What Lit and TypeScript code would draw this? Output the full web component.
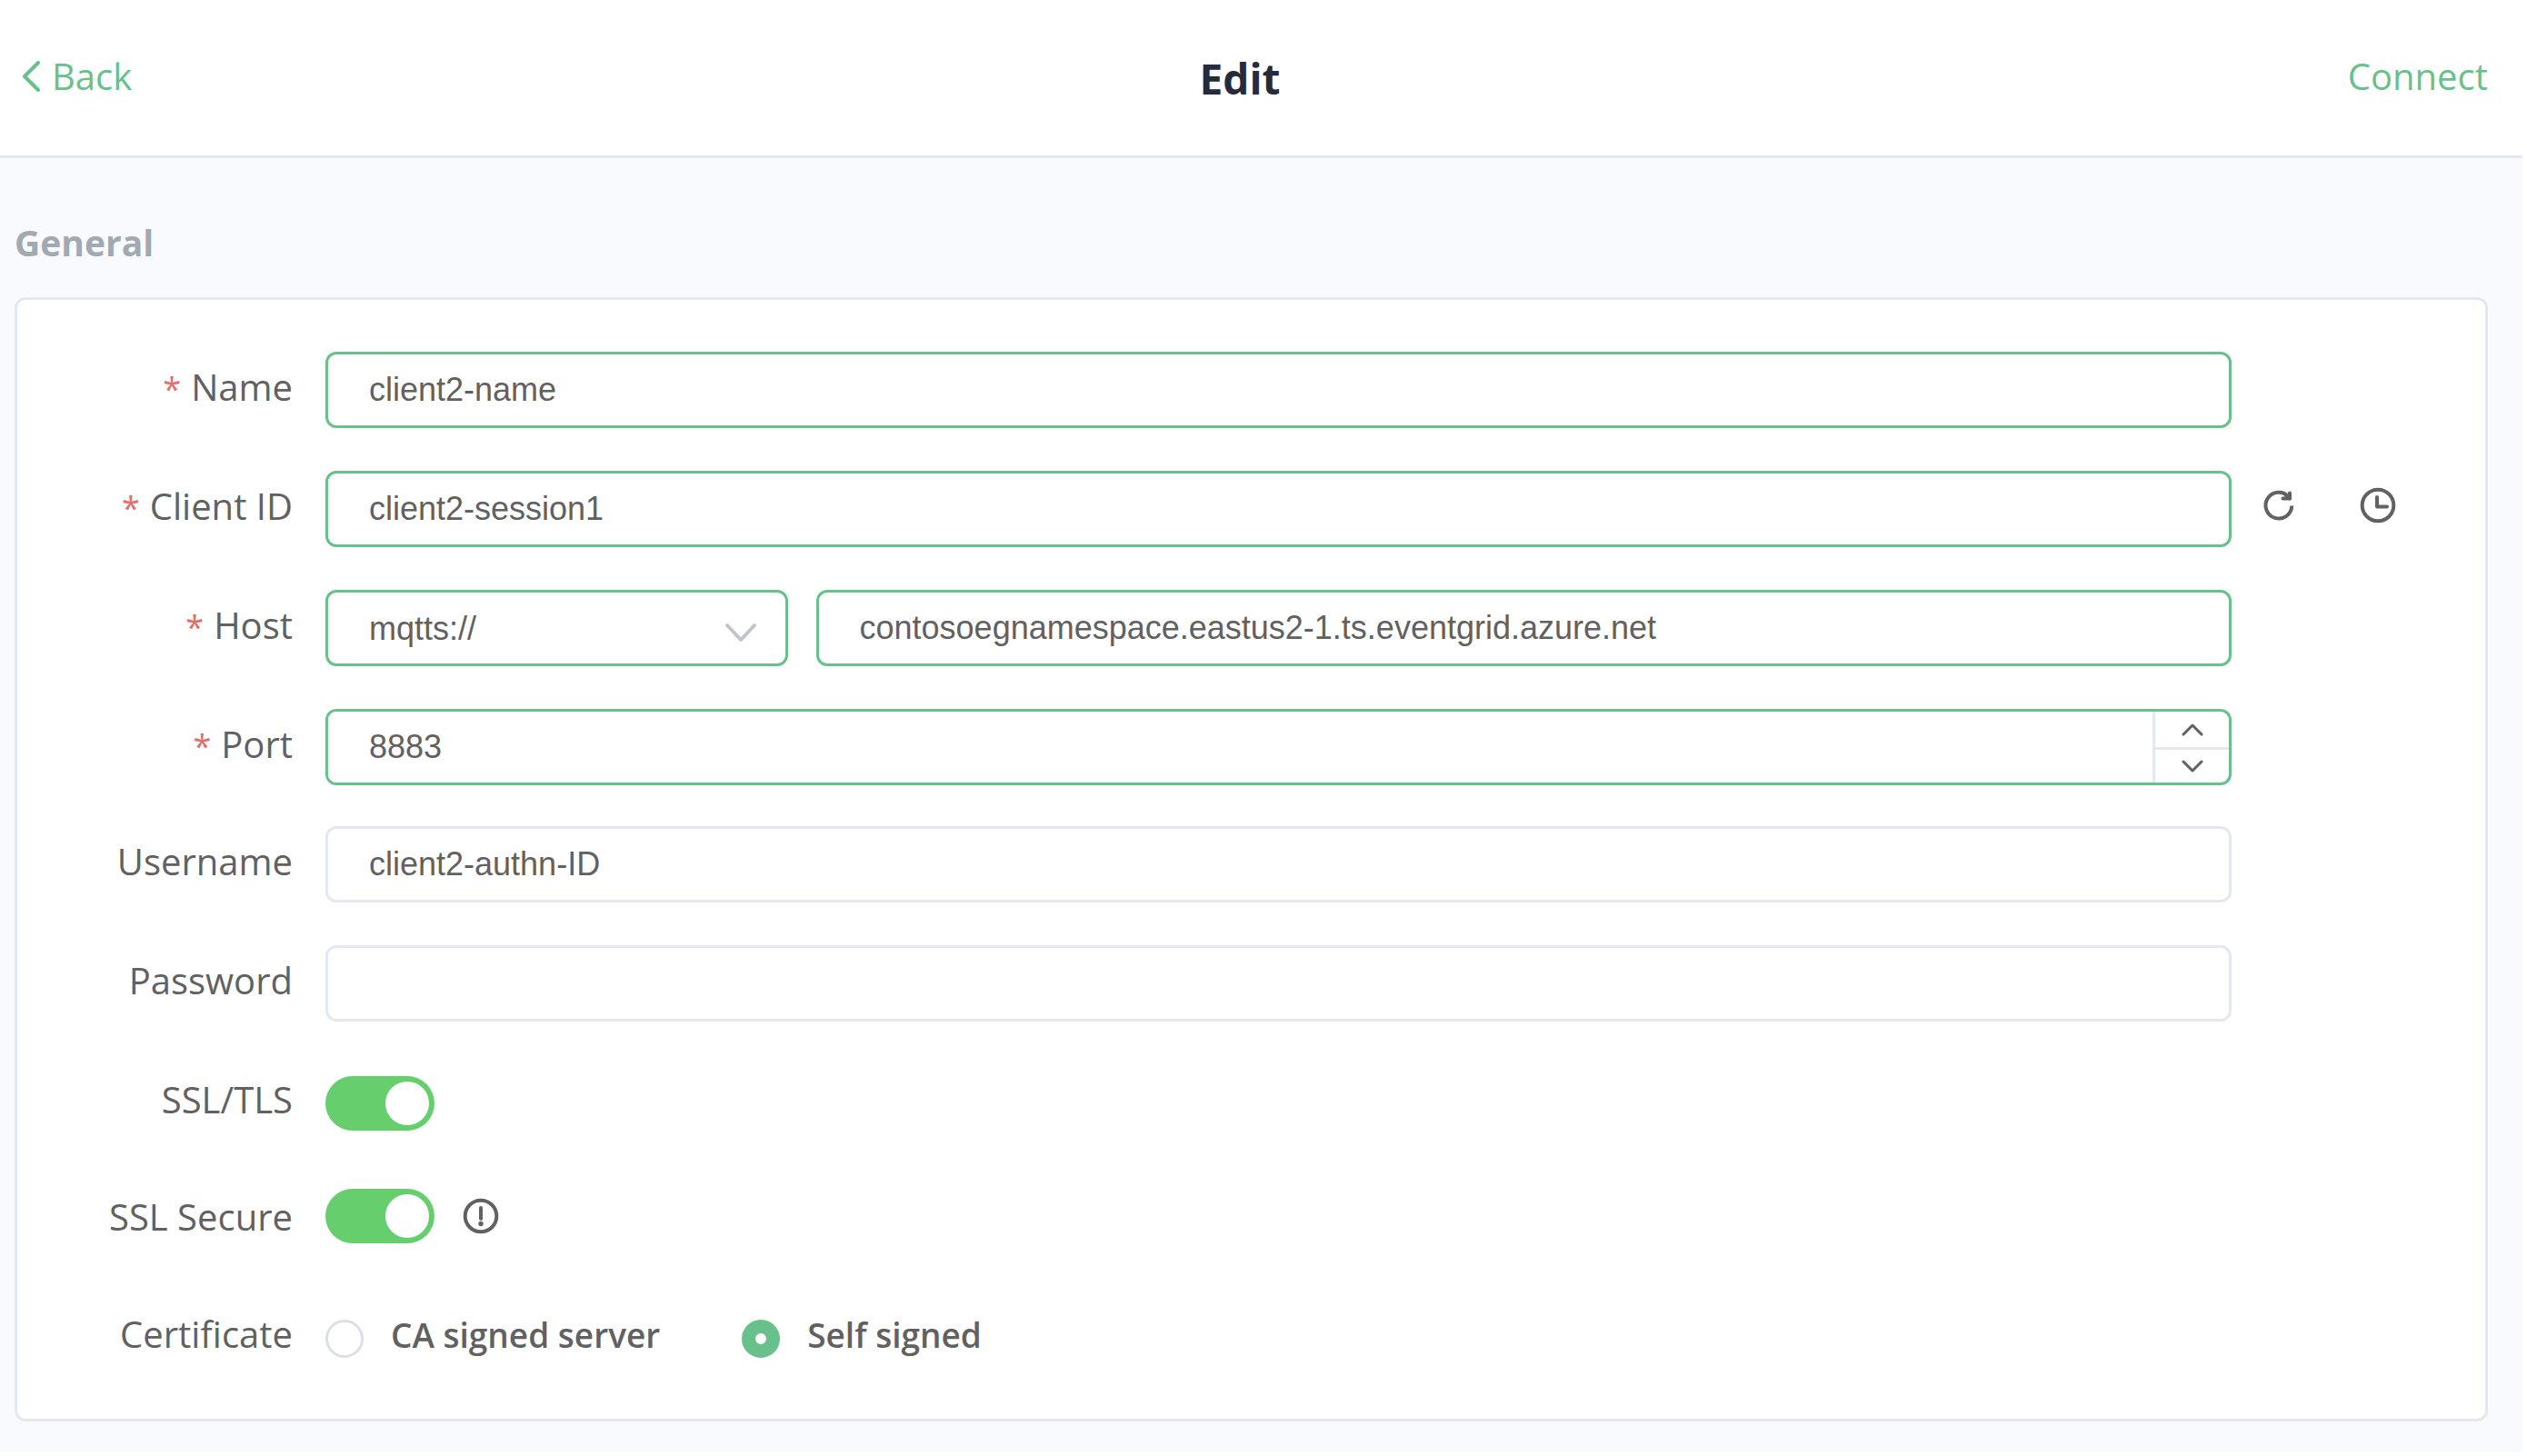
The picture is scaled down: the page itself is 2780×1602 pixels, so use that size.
import { LitElement, html, css, svg, nothing } from "lit";
import { customElement, property, state } from "lit/decorators.js";

const chevron = (points: string, width: number, height: number, stroke: number) => html`
  <svg width=${width} height=${height} viewBox="0 0 ${width} ${height}" fill="none" stroke="currentColor"
    stroke-width=${stroke} stroke-linecap="round" stroke-linejoin="round" aria-hidden="true">
    ${svg`<polyline points=${points} />`}
  </svg>
`;

const refreshIcon = html`
  <svg width="42" height="42" viewBox="0 0 42 42" fill="none" stroke="currentColor" stroke-width="4"
    stroke-linecap="round" stroke-linejoin="round" aria-hidden="true">
    <path d="M35.3 21.5A14.4 14.4 0 1 1 31.5 11.3" stroke-linecap="butt" />
    <path d="M33 7.5V13.5H25.5" />
    <path d="M29 10L33 13.5" />
  </svg>
`;

const clockIcon = html`
  <svg width="42" height="42" viewBox="0 0 42 42" fill="none" stroke="currentColor" stroke-width="4"
    stroke-linecap="round" stroke-linejoin="round" aria-hidden="true">
    <circle cx="21" cy="21" r="17.3" />
    <path d="M20 12V22.5H31" />
  </svg>
`;

const warningIcon = html`
  <svg width="42" height="42" viewBox="0 0 42 42" fill="none" stroke="currentColor" stroke-width="4"
    stroke-linecap="round" aria-hidden="true">
    <circle cx="21" cy="21" r="17.3" />
    <path d="M21 12V24" />
    <circle cx="21" cy="29.5" r="2.7" fill="currentColor" stroke="none" />
  </svg>
`;

@customElement("form-row")
class FormRow extends LitElement {
  @property({ type: Boolean }) required = false;

  static styles = css`
    :host {
      display: grid;
      grid-template-columns: 339px minmax(0, 1fr) 279px;
      height: 84px;
    }
    .label {
      padding-right: 36px;
      text-align: right;
      line-height: 77px;
      white-space: nowrap;
    }
    .star {
      margin-right: 11px;
      color: #e06c6c;
      font-size: 36px;
      line-height: 36px;
    }
    .controls {
      line-height: 78px;
    }
    .actions {
      display: flex;
      align-items: center;
      height: 76px;
      gap: 67px;
      padding-left: 31px;
    }
  `;

  render() {
    return html`
      <div class="label">${this.required ? html`<span class="star">*</span>` : nothing}<slot name="label"></slot></div>
      <div class="controls"><slot></slot></div>
      <div class="actions"><slot name="actions"></slot></div>
    `;
  }
}

@customElement("app-root")
class AppRoot extends LitElement {
  @state() private port = 8883;

  static styles = css`
    :host {
      display: block;
      box-sizing: border-box;
      min-height: 100vh;
      padding: 0 5px 5px 0;
      background: #ffffff;
      color: #616161;
      font-family: "Segoe UI", "Open Sans", "Noto Sans", sans-serif;
      font-size: 40px;
    }
    * {
      box-sizing: border-box;
    }
    svg {
      display: block;
    }
    button {
      display: flex;
      align-items: center;
      justify-content: center;
      padding: 0;
      border: 0;
      background: none;
      color: inherit;
      font: inherit;
      cursor: pointer;
    }
    .page {
      display: flex;
      flex-direction: column;
      min-height: calc(100vh - 5px);
      background: #f9fafe;
    }
    .topbar {
      display: flex;
      align-items: center;
      justify-content: space-between;
      height: 174px;
      padding: 0 38px 0 24px;
      border-bottom: 3px solid #e6e8f1;
      background: #ffffff;
    }
    .link {
      display: flex;
      align-items: center;
      gap: 12px;
      padding-bottom: 4px;
      color: #68c18b;
      text-decoration: none;
      line-height: 60px;
    }
    .title {
      margin: 0;
      color: #262b3b;
      font-size: 46px;
      font-weight: 700;
      line-height: 60px;
    }
    .content {
      padding: 63px 38px 33px 16px;
    }
    .section {
      margin: 0 0 30px;
      color: #a2a9b0;
      font-size: 39px;
      font-weight: 700;
      line-height: 60px;
    }
    .card {
      display: flex;
      flex-direction: column;
      gap: 45px;
      padding: 57px 0 48px;
      border: 3px solid #e6e8f1;
      border-radius: 12px;
      background: #ffffff;
    }
    .group {
      display: flex;
      flex-direction: column;
      gap: 47px;
    }
    .field {
      display: block;
      width: 100%;
      height: 84px;
      margin: 0;
      padding: 0 45px;
      border: 3px solid #e6e8f1;
      border-radius: 12px;
      outline: none;
      background: #ffffff;
      color: #616161;
      font-family: "Liberation Sans", Arial, sans-serif;
      font-size: 36px;
      appearance: none;
    }
    .valid {
      border-color: #68c18b;
    }
    .host {
      display: grid;
      grid-template-columns: 24.25% minmax(0, 1fr);
      gap: 31px;
    }
    .select {
      position: relative;
    }
    .arrow {
      position: absolute;
      top: 36px;
      right: 34px;
      color: #c0c4cc;
      pointer-events: none;
    }
    .number {
      display: grid;
      grid-template-columns: minmax(0, 1fr) 84px;
      height: 84px;
      border: 3px solid #68c18b;
      border-radius: 12px;
      overflow: hidden;
    }
    .number-input {
      height: 78px;
      border: 0;
      border-radius: 0;
      appearance: textfield;
    }
    .number-input::-webkit-inner-spin-button {
      appearance: none;
      margin: 0;
    }
    .steps {
      display: grid;
      grid-template-rows: 42px 36px;
      border-left: 3px solid #e6e8f1;
    }
    .up {
      border-bottom: 3px solid #e6e8f1;
    }
    .switch {
      appearance: none;
      display: inline-flex;
      align-items: center;
      justify-content: flex-end;
      width: 120px;
      height: 60px;
      margin: 0;
      padding: 6px;
      border-radius: 30px;
      background: #dcdfe6;
      vertical-align: middle;
      cursor: pointer;
    }
    .switch:checked {
      background: #67ce6e;
    }
    .switch::before {
      content: "";
      width: 48px;
      height: 48px;
      border-radius: 50%;
      background: #ffffff;
    }
    .switch:not(:checked) {
      justify-content: flex-start;
    }
    .with-hint {
      display: flex;
      align-items: center;
      gap: 30px;
      height: 76px;
    }
    .choice {
      margin-right: 90px;
      font-size: 37px;
      font-weight: 600;
      cursor: pointer;
    }
    .radio {
      appearance: none;
      width: 42px;
      height: 42px;
      margin: 0 30px 0 0;
      border: 3px solid #dcdfe6;
      border-radius: 50%;
      background: #ffffff;
      vertical-align: middle;
    }
    .radio:checked {
      border: 15px solid #68c18b;
    }
  `;

  private step(by: number) {
    this.port += by;
  }

  render() {
    return html`
      <div class="page">
        <header class="topbar">
          <a class="link" href="#back">${chevron("18,2 3,17 18,32", 21, 34, 4)}Back</a>
          <h1 class="title">Edit</h1>
          <a class="link" href="#connect">Connect</a>
        </header>
        <main class="content">
          <h2 class="section">General</h2>
          <form class="card">
            <div class="group">
              <form-row required>
                <label slot="label" for="name">Name</label>
                <input class="field valid" id="name" type="text" value="client2-name" />
              </form-row>
              <form-row required>
                <label slot="label" for="client-id">Client ID</label>
                <input class="field valid" id="client-id" type="text" value="client2-session1" />
                <button slot="actions" type="button" aria-label="Generate client ID">${refreshIcon}</button>
                <button slot="actions" type="button" aria-label="Use timestamp">${clockIcon}</button>
              </form-row>
              <form-row required>
                <label slot="label" for="host">Host</label>
                <div class="host">
                  <div class="select">
                    <select class="field valid" aria-label="Protocol">
                      <option>mqtt://</option>
                      <option selected>mqtts://</option>
                      <option>ws://</option>
                      <option>wss://</option>
                    </select>
                    <span class="arrow">${chevron("3,3 18,19 33,3", 36, 22, 4)}</span>
                  </div>
                  <input class="field valid" id="host" type="text"
                    value="contosoegnamespace.eastus2-1.ts.eventgrid.azure.net" />
                </div>
              </form-row>
              <form-row required>
                <label slot="label" for="port">Port</label>
                <div class="number">
                  <input class="field number-input" id="port" type="number" .value=${String(this.port)} />
                  <div class="steps">
                    <button class="up" type="button" aria-label="Increase port" @click=${() => this.step(1)}>
                      ${chevron("2,12 12,2 22,12", 24, 14, 3)}
                    </button>
                    <button type="button" aria-label="Decrease port" @click=${() => this.step(-1)}>
                      ${chevron("2,2 12,12 22,2", 24, 14, 3)}
                    </button>
                  </div>
                </div>
              </form-row>
            </div>
            <div class="group">
              <form-row>
                <label slot="label" for="username">Username</label>
                <input class="field" id="username" type="text" value="client2-authn-ID" />
              </form-row>
              <form-row>
                <label slot="label" for="password">Password</label>
                <input class="field" id="password" type="password" autocomplete="off" />
              </form-row>
              <form-row>
                <label slot="label" for="tls">SSL/TLS</label>
                <input class="switch" id="tls" type="checkbox" role="switch" checked />
              </form-row>
            </div>
            <form-row>
              <label slot="label" for="secure">SSL Secure</label>
              <div class="with-hint">
                <input class="switch" id="secure" type="checkbox" role="switch" checked />
                <button type="button" aria-label="About SSL Secure">${warningIcon}</button>
              </div>
            </form-row>
            <form-row>
              <span slot="label" id="certificate">Certificate</span>
              <div role="radiogroup" aria-labelledby="certificate">
                <label class="choice"><input class="radio" type="radio" name="certificate" />CA signed server</label><label
                  class="choice"><input class="radio" type="radio" name="certificate" checked />Self signed</label>
              </div>
            </form-row>
          </form>
        </main>
      </div>
    `;
  }
}
